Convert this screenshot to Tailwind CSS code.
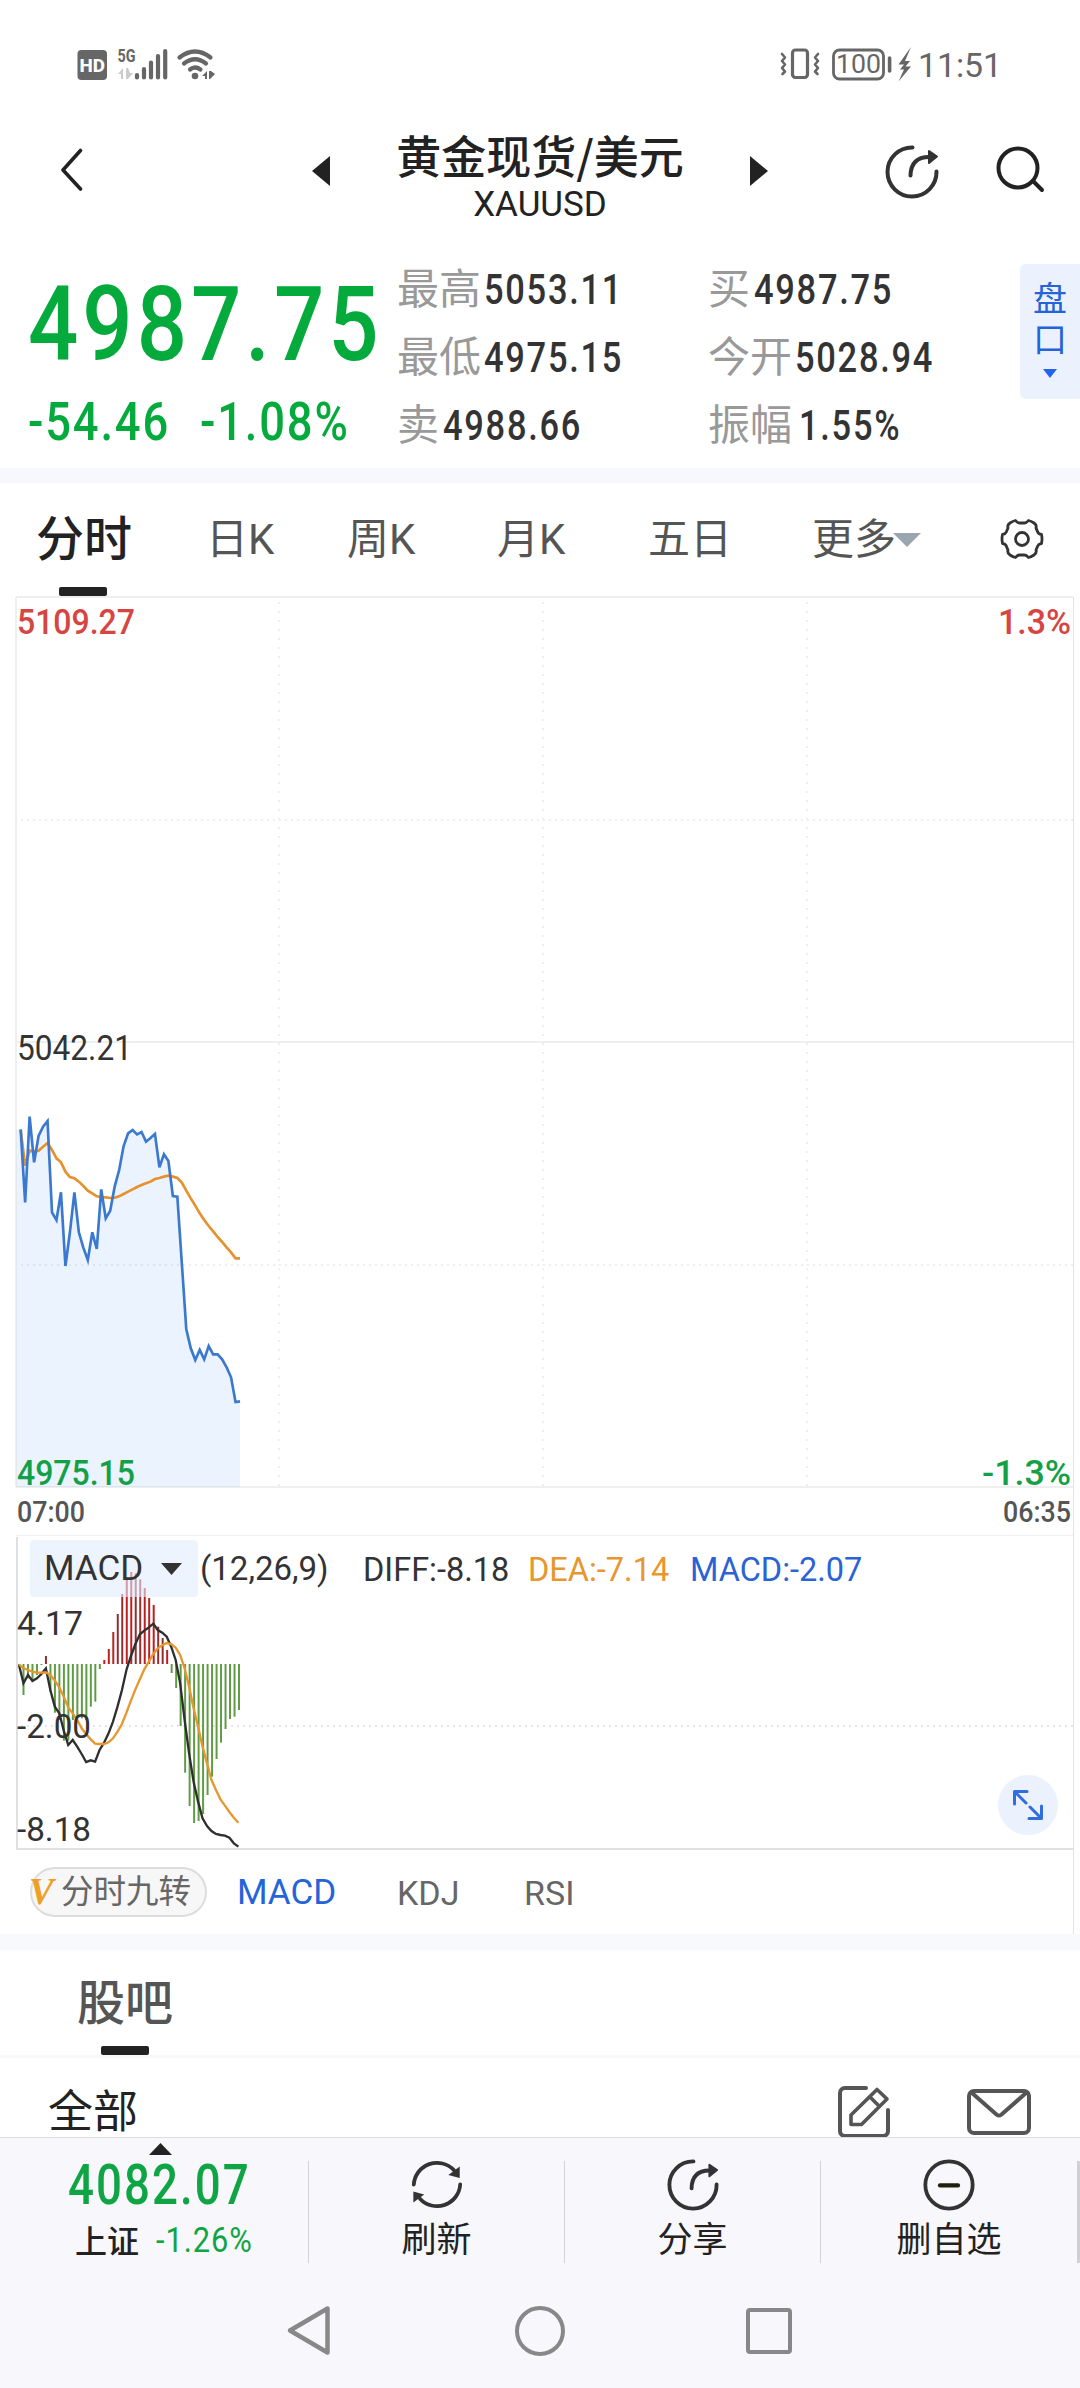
<!DOCTYPE html>
<html lang="zh-CN">
<head>
    <meta charset="UTF-8">
    <meta name="viewport" content="width=device-width, initial-scale=1.0">
    <title>黄金现货/美元 XAUUSD</title>
    <script src="https://cdn.jsdelivr.net/npm/@tailwindcss/browser@4"></script>
</head>
<body class="w-[1080px] h-[2388px] overflow-hidden bg-white flex flex-col font-['Roboto','Noto_Sans_CJK_SC',sans-serif] text-[#222]">
    <!-- Status Bar -->
    <div class="h-[129px] shrink-0">
        <svg width="1080" height="129" viewBox="0 0 1080 129" fill="#666" stroke-linecap="round" stroke-linejoin="round">
            <rect x="77.5" y="50" width="29.5" height="30" rx="4"/>
            <text x="79.500" y="71.500" font-size="19" font-weight="800" fill="#fff" textLength="25.500" lengthAdjust="spacingAndGlyphs">HD</text>
            <text x="117.500" y="62" font-size="19" font-weight="700" textLength="18" lengthAdjust="spacingAndGlyphs">5G</text>
            <path d="M118 74l5-6v11h-2v-5zM126 68l0 11h2l5-6h-3l-2-5z" fill="#ccc"/>
            <path d="M137 75v2.500M144 69v8.500M151 62.500v15M158 56v21.500M165.200 51v26.500" stroke="#666" stroke-width="4.200"/>
            <g fill="none" stroke="#666" stroke-width="4.200">
                <path d="M179.500 57.500q15.500-12 31 0M184 63.500q11-8.500 22 0M190 69.500q5-4 10.500 0"/>
            </g>
            <circle cx="195" cy="76" r="3.300"/>
            <path d="M202 76l5-5v8h-2v-3zM209 71h2l4 3-5 5h-1z"/>
            <g fill="none" stroke="#666" stroke-width="3.200">
                <rect x="792.500" y="50" width="15" height="27.500" rx="3"/>
                <path d="M782 54l3 3.500-3 3.500 3 3.500-3 3.500 3 3.500-2.500 2.500M818 54l-3 3.500 3 3.500-3 3.500 3 3.500-3 3.500 2.500 2.500" stroke-width="2.600"/>
                <rect x="833.500" y="50" width="50" height="29" rx="6" stroke-width="2.800"/>
                <path d="M889.600 58v13" stroke-width="3.600"/>
            </g>
            <text x="836" y="73" font-size="26" textLength="45" lengthAdjust="spacingAndGlyphs">100</text>
            <path d="M911 47l-12.500 17.500h5.500l-4 5h4l-5.500 12 12.500-15h-5.500l4.500-5.500h-5z"/>
            <text x="918" y="77" font-size="34" textLength="84" lengthAdjust="spacingAndGlyphs">11:51</text>
        </svg>
    </div>

    <!-- Header -->
    <header class="h-[111px] shrink-0 flex items-start">
        <svg class="ml-[60px] mt-[19px] shrink-0" width="24" height="44" viewBox="0 0 24 44" fill="none" stroke="#222" stroke-width="3.600" stroke-linecap="round" stroke-linejoin="round"><path d="M20.500 2.500L3 22l17.500 19"/></svg>
        <svg class="ml-[228px] mt-[27px] shrink-0" width="18" height="30" viewBox="0 0 18 30" fill="#222"><path d="M18 0v30L0 15z"/></svg>
        <div class="w-[420px] shrink-0 flex flex-col items-center">
            <h1 class="text-[45px] leading-[52px] font-medium whitespace-nowrap font-['Noto_Sans_CJK_SC',sans-serif]">黄金现货/美元</h1>
            <div class="text-[35px] leading-[48px]">XAUUSD</div>
        </div>
        <svg class="mt-[27px] shrink-0" width="18" height="30" viewBox="0 0 18 30" fill="#222"><path d="M0 0v30l18-15z"/></svg>
        <svg class="ml-[117px] mt-[15px] shrink-0" width="54" height="55" viewBox="0 0 54 55" fill="none" stroke="#333" stroke-width="4" stroke-linecap="round"><path d="M27.500 3.500A24.500 24.500 0 1 0 51.500 27.500"/><path d="M25.500 31.500Q26 13 44 13"/><path d="M44 7l8 5.500-8 6.500z" fill="#333" stroke-width="2" stroke-linejoin="round"/></svg>
        <svg class="ml-[57px] mt-[17px] shrink-0" width="50" height="48" viewBox="0 0 50 48" fill="none" stroke="#222" stroke-width="4" stroke-linecap="round"><circle cx="22" cy="22" r="19.500"/><path d="M37 35l9 9"/></svg>
    </header>

    <!-- Quote -->
    <section class="h-[228px] shrink-0 flex items-start">
        <div class="w-[397px] shrink-0 pl-7 text-[#05aa3c] font-medium">
            <div class="mt-[33px] h-[103px] text-[103px] leading-[103px] tracking-[.045em] whitespace-nowrap origin-left scale-x-[.86]">4987.75</div>
            <div class="mt-[18px] h-[56px] flex">
                <div class="w-[172px] text-[54px] leading-[56px] tracking-[.04em] whitespace-nowrap origin-left scale-x-[.84]">-54.46</div>
                <div class="text-[54px] leading-[56px] tracking-[.04em] whitespace-nowrap origin-left scale-x-[.84]">-1.08%</div>
            </div>
        </div>
        <div class="w-[623px] shrink-0 mt-[16px] grid grid-cols-[311px_312px] text-[42px] leading-[68px] whitespace-nowrap text-[#333]">
            <div class="flex"><span class="w-[87px] text-[#999]">最高</span><span class="font-medium tracking-[.05em] origin-left scale-x-[.82]">5053.11</span></div>
            <div class="flex"><span class="w-[46px] text-[#999]">买</span><span class="font-medium tracking-[.05em] origin-left scale-x-[.82]">4987.75</span></div>
            <div class="flex"><span class="w-[87px] text-[#999]">最低</span><span class="font-medium tracking-[.05em] origin-left scale-x-[.82]">4975.15</span></div>
            <div class="flex"><span class="w-[87px] text-[#999]">今开</span><span class="font-medium tracking-[.05em] origin-left scale-x-[.82]">5028.94</span></div>
            <div class="flex"><span class="w-[46px] text-[#999]">卖</span><span class="font-medium tracking-[.05em] origin-left scale-x-[.82]">4988.66</span></div>
            <div class="flex"><span class="w-[91px] text-[#999]">振幅</span><span class="font-medium tracking-[.05em] origin-left scale-x-[.82]">1.55%</span></div>
        </div>
        <div class="w-[60px] h-[135px] mt-[24px] shrink-0 rounded-l-md bg-[#ebf2fe] flex flex-col items-center pt-[15px] text-[34px] leading-[41px] text-[#2563d9]">
            <span>盘</span>
            <span>口</span>
            <svg class="mt-2" width="14" height="9" viewBox="0 0 14 9" fill="#2563e8"><path d="M0 0h14L7 9z"/></svg>
        </div>
    </section>
    <div class="h-[15px] shrink-0 bg-[#f7f8fd]"></div>

    <!-- Period Tabs -->
    <nav class="h-[113px] shrink-0 flex items-start text-[42px] leading-[113px] whitespace-nowrap text-[#555]">
        <div class="ml-[36px] w-[170px] h-[113px] relative">
            <span class="text-[48px] font-medium text-[#222]">分时</span>
            <span class="absolute left-[23px] bottom-0 w-[48px] h-[9px] rounded-xs bg-[#222]"></span>
        </div>
        <div class="w-[141px]">日K</div>
        <div class="w-[150px]">周K</div>
        <div class="w-[151px]">月K</div>
        <div class="w-[164px]">五日</div>
        <div class="flex items-center w-[188px]">更多<svg class="-ml-[3px]" width="28" height="14" viewBox="0 0 28 14" fill="#9aa5b0"><path d="M0 0h28L14 14z"/></svg></div>
        <svg class="mt-[34px]" width="44" height="44" viewBox="-22 -22 44 44" fill="none" stroke="#333" stroke-width="2.800" stroke-linejoin="round">
            <path d="M19.500 4.500Q16.500 5 15.700 7T14 11Q15 14 12 16T6.500 18.500Q4.500 16 2.400 16H-2.400Q-4.500 16-6.500 18.500-9 18-12 16T-14 11Q-15 9-15.700 7T-19.500 4.500Q-20.500 0-19.500-4.500-16.500-5-15.700-7T-14-11Q-15-14-12-16T-6.500-18.500Q-4.500-16-2.400-16H2.400Q4.500-16 6.500-18.500 9-18 12-16T14-11Q15-9 15.700-7T19.500-4.500Q20.500 0 19.500 4.500z"/>
            <circle r="6.500"/>
        </svg>
    </nav>

    <!-- Intraday Chart -->
    <svg class="shrink-0" width="1080" height="939" viewBox="0 596 1080 939" fill="none">
        <path d="M16 597H1073M16 1042H1073M16 1487H1073M16 597V1487" stroke="#efefef" stroke-width="2"/>
        <path d="M1073.500 597V1535" stroke="#e3e3e3"/>
        <path d="M279 602V1487M543 602V1487M807 602V1487" stroke="#efefef" stroke-width="2" stroke-dasharray="2 7"/>
        <path d="M21 820H1073M21 1265H1073" stroke="#efefef" stroke-width="2" stroke-dasharray="2 4"/>
        <g transform="translate(0 1000) scale(.33333)" stroke-width="8" stroke-linejoin="miter">
            <path id="priceArea" fill="#3b86f7" fill-opacity=".1"/>
            <polyline id="avgLine" stroke="#e5912d"/>
            <polyline id="priceLine" stroke="#3b78cf"/>
        </g>
        <g font-size="35.500" font-weight="500">
            <text x="17" y="634" fill="#d64541" textLength="118" lengthAdjust="spacingAndGlyphs">5109.27</text>
            <text x="998" y="634" fill="#d64541" textLength="73" lengthAdjust="spacingAndGlyphs">1.3%</text>
            <text x="17" y="1059.500" fill="#333" font-weight="400" textLength="115" lengthAdjust="spacingAndGlyphs">5042.21</text>
            <text x="17" y="1485" fill="#14a046" textLength="118" lengthAdjust="spacingAndGlyphs">4975.15</text>
            <text x="982" y="1485" fill="#14a046" textLength="89" lengthAdjust="spacingAndGlyphs">-1.3%</text>
        </g>
        <g font-size="29.500" font-weight="500" fill="#555">
            <text x="17" y="1522" textLength="68" lengthAdjust="spacingAndGlyphs">07:00</text>
            <text x="1003" y="1522" textLength="68" lengthAdjust="spacingAndGlyphs">06:35</text>
        </g>
    </svg>

    <!-- MACD Chart -->
    <div class="h-[315px] shrink-0 relative">
        <svg class="absolute inset-0" width="1080" height="315" viewBox="0 1535 1080 315" fill="none">
            <path d="M16 1535.500H1073" stroke="#efefef"/>
            <path d="M1073.500 1535V1850" stroke="#e3e3e3"/>
            <path d="M17 1537V1849H1073" stroke="#e0e0e0" stroke-width="2"/>
            <path d="M21 1726H1073" stroke="#e6e6e6" stroke-width="2" stroke-dasharray="2 4"/>
            <g transform="translate(0 1520) scale(.33333)" stroke-width="7">
                <g id="macdBars" stroke-width="6"></g>
                <polyline id="diffLine" stroke="#2f2f2f"/>
                <polyline id="deaLine" stroke="#e8962e"/>
            </g>
            <g font-size="33.500" fill="#333">
                <text x="17" y="1635" textLength="66" lengthAdjust="spacingAndGlyphs">4.17</text>
                <text x="17" y="1738" textLength="74" lengthAdjust="spacingAndGlyphs">-2.00</text>
                <text x="17" y="1841" textLength="74" lengthAdjust="spacingAndGlyphs">-8.18</text>
            </g>
        </svg>
        <div class="relative flex items-start pl-[30px] pt-[5px] text-[33px] leading-[57px] whitespace-nowrap text-[#333]">
            <div class="w-[168px] h-[57px] rounded-sm bg-[#e2ecfe]/60 pl-[14px] flex items-center text-[35px]">
                MACD
                <svg class="ml-[18px]" width="21" height="12" viewBox="0 0 21 12" fill="#333"><path d="M0 0h21L10.500 12z"/></svg>
            </div>
            <div class="ml-[2px] w-[163px]">(12,26,9)</div>
            <div class="w-[165px] mt-[2px] text-[32.5px]">DIFF:-8.18</div>
            <div class="w-[162px] mt-[2px] text-[32.5px] text-[#e8962e]">DEA:-7.14</div>
            <div class="mt-[2px] text-[32.5px] text-[#2b63d6]">MACD:-2.07</div>
        </div>
        <div class="absolute left-[998px] top-[240px] w-[60px] h-[60px] rounded-full bg-[#ebf2fe] flex items-center justify-center">
            <svg width="32" height="32" viewBox="0 0 32 32" fill="none" stroke="#2f6de0" stroke-width="3" stroke-linecap="round" stroke-linejoin="round"><path d="M2.500 15V2.500H15M3 3l11 11M29.500 17v12.500H17M29 29L18 18"/></svg>
        </div>
    </div>

    <!-- Indicator Tabs -->
    <div class="h-[84px] w-[1074px] shrink-0 border-r border-[#e3e3e3] flex items-start pt-[17px] pl-[30px] text-[35px] leading-[52px] whitespace-nowrap text-[#666]">
        <div class="w-[177px] h-[50px] rounded-full border-2 border-[#ddd] bg-[#f7f7f7] flex items-center text-[32.5px]">
            <span class="-ml-[3px] w-[32px] text-[37px] font-bold italic text-[#efa024] font-['Liberation_Serif',serif]">V</span>
            <span>分时九转</span>
        </div>
        <div class="ml-[30px] w-[160px] text-[#2563d9]">MACD</div>
        <div class="w-[127px] text-[34px]">KDJ</div>
        <div class="text-[34px]">RSI</div>
    </div>
    <div class="h-[16px] shrink-0 bg-[#f7f9fd]"></div>

    <!-- Forum -->
    <div class="h-[105px] shrink-0 pl-[77px]">
        <div class="relative h-full w-[96px] text-[48px] leading-[108px] font-medium text-[#555]">
            股吧
            <span class="absolute left-[24px] bottom-0 w-[48px] h-[9px] rounded-xs bg-[#222]"></span>
        </div>
    </div>
    <div class="h-[3px] shrink-0 bg-[#f7f9fd]"></div>
    <div class="h-[79px] shrink-0 overflow-hidden flex items-start pl-[48px]">
        <div class="w-[789px] text-[45px] leading-[52px] pt-[29px]">全部</div>
        <svg class="mt-[27px]" width="54" height="54" viewBox="0 0 54 54" fill="none" stroke="#555" stroke-width="4" stroke-linecap="round" stroke-linejoin="round"><path d="M29 3H8a5 5 0 0 0-5 5v38a5 5 0 0 0 5 5h38a5 5 0 0 0 5-5V25"/><path d="M40 4.500l10 9.500L24.500 39.500H14V30zM33 12l9.500 9.500" stroke-width="3.600"/></svg>
        <svg class="ml-[76px] mt-[31px]" width="64" height="46" viewBox="0 0 64 46" fill="none" stroke="#555" stroke-width="4" stroke-linecap="round" stroke-linejoin="round"><rect x="2" y="2" width="60" height="42" rx="5"/><path d="M5 4l24.500 21.500q2.500 2 5 0L59 4"/></svg>
    </div>

    <!-- Bottom Bar -->
    <footer class="h-[251px] shrink-0 bg-[#f7f7fc] border-t border-[#ddd] flex flex-col">
        <div class="h-[135px] flex items-start">
            <div class="w-[308px] pl-[68px] whitespace-nowrap text-[#0fa544] font-medium">
                <svg class="ml-[81px] mt-[5px]" width="23" height="12" viewBox="0 0 23 12" fill="#222"><path d="M0 12h23L11.500 0z"/></svg>
                <div class="mt-[5px] h-[50px] text-[55px] leading-[50px] tracking-[.045em] origin-left scale-x-[.83]">4082.07</div>
                <div class="flex mt-[10px] h-[44px] leading-[44px] pl-[7px]">
                    <span class="w-[81px] text-[32px] text-[#222]">上证</span>
                    <span class="text-[35px] leading-[41px] tracking-[.03em] font-normal origin-left scale-x-[.88]">-1.26%</span>
                </div>
            </div>
            <div class="mt-[23px] w-[256px] h-[102px] border-l border-[#d2d2d6] flex flex-col items-center text-[35px] leading-[44px]">
                <svg class="-mt-[3px]" width="56" height="56" viewBox="0 0 56 56" fill="none" stroke="#333" stroke-width="4" stroke-linecap="round"><path d="M3.500 28A24.500 24.500 0 0 1 46 13M52.500 28A24.500 24.500 0 0 1 10 43"/><path d="M52 9v12l-12-3zM3 35.500l11.500 3L3 47z" fill="#333" stroke="none"/></svg>
                <span class="mt-[8px]">刷新</span>
            </div>
            <div class="mt-[23px] w-[256px] h-[102px] border-l border-[#d2d2d6] flex flex-col items-center text-[35px] leading-[44px]">
                <svg class="-mt-[3px]" width="54" height="56" viewBox="0 0 54 55" fill="none" stroke="#333" stroke-width="4" stroke-linecap="round"><path d="M27.500 3.500A24.500 24.500 0 1 0 51.500 27.500"/><path d="M25.500 31.500Q26 13 44 13"/><path d="M44 7l8 5.500-8 6.500z" fill="#333" stroke-width="2" stroke-linejoin="round"/></svg>
                <span class="mt-[8px]">分享</span>
            </div>
            <div class="mt-[23px] w-[257px] h-[102px] border-l border-[#d2d2d6] flex flex-col items-center text-[35px] leading-[44px]">
                <svg class="-mt-[3px]" width="56" height="56" viewBox="0 0 56 56" fill="none" stroke="#333" stroke-width="4" stroke-linecap="round"><circle cx="28" cy="28.500" r="25"/><path d="M18.500 29h19" stroke="#22200a" stroke-width="4.500"/></svg>
                <span class="mt-[8px]">删自选</span>
            </div>
            <div class="mt-[23px] w-[3px] h-[102px] bg-[#d0d0d3]"></div>
        </div>
        <!-- System Navigation -->
        <div class="flex items-center pt-[32px] pl-[286px]">
            <svg width="46" height="51" viewBox="0 0 46 51" fill="none" stroke="#888" stroke-width="4.500" stroke-linejoin="round"><path d="M41.500 3.500v44L4 25.500z"/></svg>
            <div class="ml-[183px] w-[50px] h-[50px] rounded-full border-[4.5px] border-[#888]"></div>
            <div class="ml-[181px] w-[46px] h-[46px] rounded border-[4.5px] border-[#888]"></div>
        </div>
    </footer>

    <script>
        const prices = [388,607,350,487,408,380,363,637,660,577,798,697,577,697,743,780,697,747,568,655,632,560,510,438,400,390,403,396,425,414,402,502,463,483,588,590,790,988,1045,1080,1050,1078,1038,1063,1063,1078,1102,1132,1206,1204];
        const averages = [390,497,452,455,452,440,429,450,475,487,515,531,535,545,558,572,580,589,591,592,594,593,589,582,575,568,561,555,550,545,537,534,530,527,530,534,548,572,595,617,640,660,678,694,711,726,742,757,775,775];
        const bars = [440,525,475,480,465,435,408,515,578,600,662,662,600,592,595,600,560,545,447,420,387,336,282,222,180,156,160,178,204,234,255,320,354,390,459,504,618,758,858,909,903,882,825,770,717,668,627,597,590,570];
        const diff = [435,490,465,483,475,462,445,510,560,580,632,675,660,680,702,726,721,725,690,668,640,605,560,510,450,408,372,343,332,322,311,330,338,350,380,420,490,600,700,785,845,895,918,933,942,945,947,953,970,980];
        const dea = [433,445,450,455,458,458,457,465,482,502,530,562,580,600,625,642,658,671,672,672,667,655,635,612,578,542,508,478,448,425,402,385,376,369,372,383,405,445,500,565,620,680,730,780,810,838,857,876,893,908];
        const darkBars = [6, 22, 23, 26, 27, 31, 32];
        const zero = 432;

        function toPoints(values, start) {
            return values.map((y, i) => (start + i * 13.43).toFixed(1) + ',' + y).join(' ');
        }

        document.getElementById('priceLine').setAttribute('points', toPoints(prices, 62));
        document.getElementById('avgLine').setAttribute('points', toPoints(averages, 62));
        document.getElementById('priceArea').setAttribute('d', 'M49,388 L' + toPoints(prices, 62) + ' V1461 H49 Z');
        document.getElementById('diffLine').setAttribute('points', toPoints(diff, 57));
        document.getElementById('deaLine').setAttribute('points', toPoints(dea, 57));

        // Histogram bars grow up (red) or down (green) from the zero line
        document.getElementById('macdBars').innerHTML = bars.map((y, i) => {
            const x = (57 + i * 13.47).toFixed(1);
            const color = y > zero ? '#5f9c45' : darkBars.includes(i) ? '#8f2f2f' : '#bb1f1f';
            return `<path d="M${x} ${zero}V${y}" stroke="${color}"/>`;
        }).join('');
    </script>
</body>
</html>
